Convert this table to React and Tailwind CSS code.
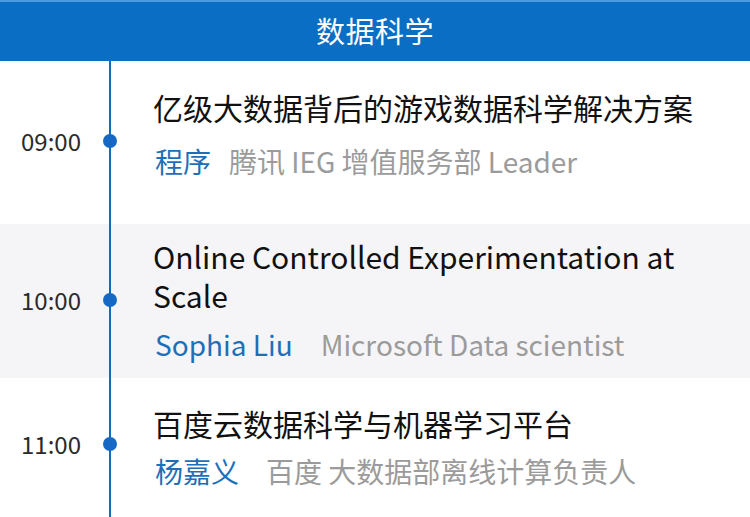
import React from "react";

const font = { fontFamily: '"Noto Sans CJK SC", "Source Han Sans SC", sans-serif' };

function Row({ time, bg, pad, h, dotY, children }) {
  return (
    <div className={`flex ${bg} ${h}`}>
      <div className="relative w-[111px] shrink-0 border-r-2 border-[#1569b5]">
        <div className={`absolute left-0 right-0 ${dotY} -translate-y-1/2 flex items-center justify-end pr-[28px]`}>
          <span className="text-[24px] leading-none text-[#2a2a2a]">{time}</span>
        </div>
        <span className={`absolute right-[-8px] ${dotY} -translate-y-1/2 w-[14px] h-[14px] rounded-full bg-[#1569c5]`} />
      </div>
      <div className={`flex-1 pl-[42px] pr-4 ${pad} flex flex-col`}>{children}</div>
    </div>
  );
}

export default function App() {
  return (
    <div className="w-[750px] h-[517px] overflow-hidden bg-white" style={font}>
      <div className="h-[61px] bg-[#0a6ec4] border-t-2 border-[#4b9be0] flex items-center justify-center">
        <span className="text-white text-[29px] leading-none tracking-[0.5px] -mt-[2px]">数据科学</span>
      </div>
      <Row time="09:00" bg="bg-white" h="h-[163px]" pad="pt-[26px]" dotY="top-[80px]">
        <div className="text-[30px] leading-[40px] text-[#111]">亿级大数据背后的游戏数据科学解决方案</div>
        <div className="mt-[15px] text-[28px] leading-[38px] flex">
          <span className="text-[#1d6fb8] ml-[2px]">程序</span>
          <span className="text-[#9b9b9b] ml-[18px]">腾讯 IEG 增值服务部 Leader</span>
        </div>
      </Row>
      <Row time="10:00" bg="bg-[#f5f5f7]" h="h-[154px]" pad="pt-[13px]" dotY="top-[76px]">
        <div className="text-[30px] leading-[39px] text-[#111] pr-[40px]">Online Controlled Experimentation at Scale</div>
        <div className="mt-[10px] text-[28px] leading-[38px] flex">
          <span className="text-[#1d6fb8] ml-[2px]">Sophia Liu</span>
          <span className="text-[#9b9b9b] ml-[28px]">Microsoft Data scientist</span>
        </div>
      </Row>
      <Row time="11:00" bg="bg-white" h="h-[139px]" pad="pt-[25px]" dotY="top-[66px]">
        <div className="text-[30px] leading-[40px] text-[#111]">百度云数据科学与机器学习平台</div>
        <div className="mt-[9px] text-[28px] leading-[38px] flex">
          <span className="text-[#1d6fb8] ml-[2px]">杨嘉义</span>
          <span className="text-[#9b9b9b] ml-[27px]">百度 大数据部离线计算负责人</span>
        </div>
      </Row>
    </div>
  );
}
